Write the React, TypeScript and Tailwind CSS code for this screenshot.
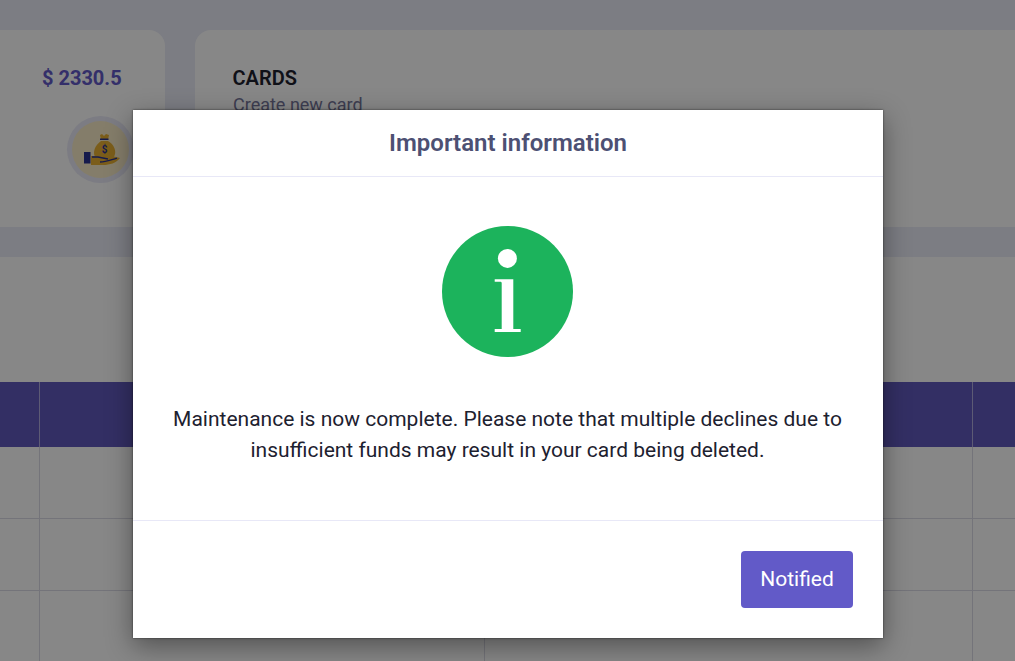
export default function App() {
  const rows = [0, 1, 2];
  return (
    <div className="relative h-[661px] w-[1015px] overflow-hidden bg-[#eaecf7] font-['Roboto',sans-serif]">
      <div className="flex gap-[30px] pt-[30px]">
        <div className="ml-[-30px] flex h-[197px] w-[195px] shrink-0 flex-col rounded-2xl bg-white pl-[72px] pt-[36px]">
          <div className="text-[20px] font-bold leading-[24px] text-[#625ac8]">$ 2330.5</div>
          <div className="ml-[25px] mt-[26px] flex h-[67px] w-[67px] items-center justify-center rounded-full bg-[#eaeaf8]">
            <div className="h-[57px] w-[57px] rounded-full bg-[#f9edc8]">
              <svg viewBox="0 0 57 57" className="h-[57px] w-[57px]">
                <path d="M28 14 L30 13 L32 15 L34 13 L37 14 L36 19 H29 Z" fill="#e9b032" />
                <rect x="28" y="17.5" width="8.5" height="1.5" fill="#2a3390" />
                <path d="M29 20 H36 C41 23 44 28 43 33 C42 38 38 39 32 39 C26 39 22 37 22 32 C22 27 25 23 29 20 Z" fill="#e9b032" />
                <path d="M19 35 H26 C30 36 35 37 40 35 L48 37 C44 42 38 44 31 44 H19 Z" fill="#e9b032" />
                <path d="M20 36 H26 L36 38 M28 41 C34 41 38 39 45 37" stroke="#2a3390" strokeWidth="1.3" fill="none" />
                <rect x="12" y="31" width="6.5" height="11.5" fill="#2a3390" />
                <text x="32.5" y="32" textAnchor="middle" fontSize="10" fontWeight="700" fill="#2a3390" fontFamily="Roboto, sans-serif">$</text>
              </svg>
            </div>
          </div>
        </div>
        <div className="mr-[-30px] h-[197px] grow rounded-2xl bg-white pl-[38px] pt-[36px]">
          <div className="ml-[-0.5px] text-[20px] font-semibold leading-[24px] text-[#1d212f]">CARDS</div>
          <div className="mt-[3px] text-[18px] leading-[24px] text-[#76769a]">Create new card</div>
        </div>
      </div>
      <div className="mt-[30px] h-[404px] bg-white pt-[125px]">
        <div className="grid h-[65px] grid-cols-[40px_445px_488px_1fr] bg-[#6059bd]">
          <div className="border-r border-[#ffffff80]" />
          <div />
          <div className="border-r border-[#ffffff80]" />
          <div />
        </div>
        {rows.map((r) => (
          <div key={r} className="grid h-[72px] grid-cols-[40px_445px_488px_1fr] border-b border-[#dbdbe6]">
            <div className="border-r border-[#dbdbe6]" />
            <div className="border-r border-[#dbdbe6]" />
            <div className="border-r border-[#dbdbe6]" />
            <div />
          </div>
        ))}
      </div>

      <div className="absolute inset-0 bg-black/[.47] pt-[110px]">
        <div className="ml-[133px] flex h-[528px] w-[750px] flex-col bg-white shadow-[0_0_2px_rgba(0,0,0,0.6),0_8px_25px_rgba(0,0,0,0.4)]">
          <div className="flex h-[67px] shrink-0 items-center justify-center border-b border-[#e8e8f7]">
            <h2 className="text-[24px] font-semibold text-[#4d5073]">Important information</h2>
          </div>
          <div className="flex h-[344px] shrink-0 flex-col items-center border-b border-[#e8e8f7] pt-[49px]">
            <svg viewBox="0 0 131 131" className="mr-[2px] h-[131px] w-[131px]">
              <circle cx="65.5" cy="65.5" r="65.5" fill="#1cb35c" />
              <circle cx="65.4" cy="32.4" r="9.5" fill="#fff" />
              <path d="M52.7 53.3 H71.3 V103 H78.7 V106 H52.7 V103 H59.7 V57 C59.7 56 59 55.7 58 55.7 H52.7 Z" fill="#fff" />
            </svg>
            <p className="mr-[1px] mt-[47px] w-[700px] text-center text-[21px] leading-[31px] text-[#1d212f]">
              Maintenance is now complete. Please note that multiple declines due to insufficient funds may result in your card being deleted.
            </p>
          </div>
          <div className="flex grow justify-end pr-[30px] pt-[30px]">
            <button className="h-[57px] w-[112px] rounded bg-[#625ac8] text-[21px] text-white">Notified</button>
          </div>
        </div>
      </div>
    </div>
  );
}
